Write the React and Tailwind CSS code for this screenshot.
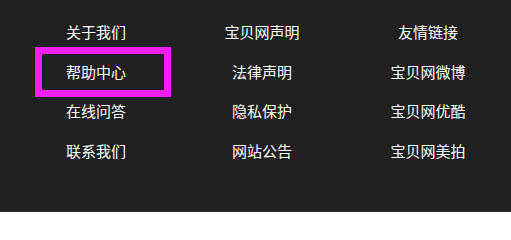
const columns = [
  ["关于我们", "帮助中心", "在线问答", "联系我们"],
  ["宝贝网声明", "法律声明", "隐私保护", "网站公告"],
  ["友情链接", "宝贝网微博", "宝贝网优酷", "宝贝网美拍"],
];

export default function App() {
  return (
    <div
      className="relative h-[212px] w-full bg-[#202020] border-b border-[#343434] text-white"
      style={{ fontFamily: '"Noto Sans CJK SC", "Noto Sans", sans-serif' }}
    >
      <div className="grid grid-cols-3 pl-[13px] pt-[12px]">
        {columns.map((col, i) => (
          <ul key={i} className="flex flex-col items-center">
            {col.map((item) => (
              <li key={item}>
                <a href="#" className="block text-[15px] leading-[39.5px] text-white">
                  {item}
                </a>
              </li>
            ))}
          </ul>
        ))}
      </div>

      {/* highlight box */}
      <div className="pointer-events-none absolute left-[35px] top-[47px] h-[50px] w-[136px] border-[7px] border-[#f020f0]" />
    </div>
  );
}
